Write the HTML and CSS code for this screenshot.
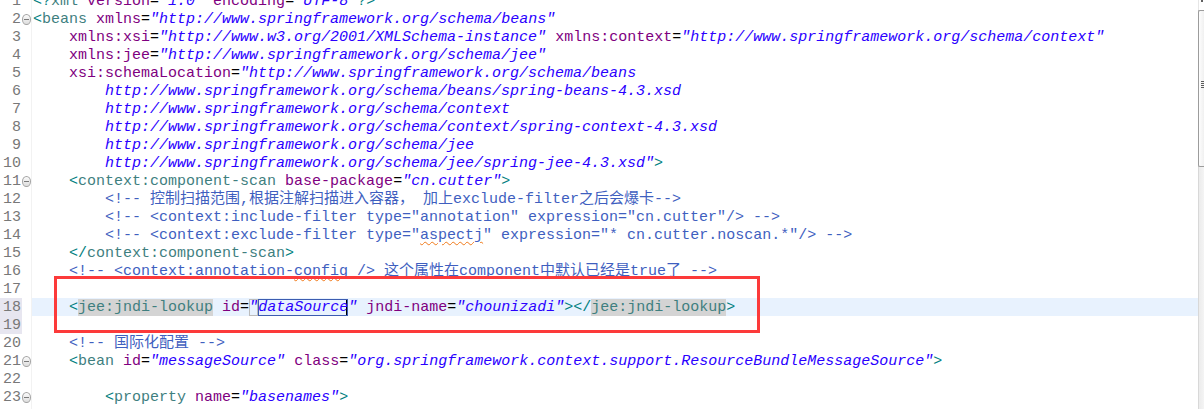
FILE: index.html
```html
<!DOCTYPE html>
<html lang="zh">
<head>
    <meta charset="UTF-8">
    <title>applicationContext.xml</title>
    <link rel="stylesheet" href="styles.css">
</head>
<body>
    <div class="editor">
        <div class="lines">
            <div class="line"><span class="num">1</span><span class="fold"></span><span class="code"><span class="d">&lt;?</span><span class="t">xml</span> <span class="a">version</span>=<span class="v">"1.0"</span> <span class="a">encoding</span>=<span class="v">"UTF-8"</span><span class="d">?&gt;</span></span></div>
            <div class="line"><span class="num">2</span><span class="fold open"></span><span class="code"><span class="d">&lt;</span><span class="t">beans</span> <span class="a">xmlns</span>=<span class="v">"http://www.springframework.org/schema/beans"</span></span></div>
            <div class="line"><span class="num">3</span><span class="fold"></span><span class="code">    <span class="a">xmlns:xsi</span>=<span class="v">"http://www.w3.org/2001/XMLSchema-instance"</span> <span class="a">xmlns:context</span>=<span class="v">"http://www.springframework.org/schema/context"</span></span></div>
            <div class="line"><span class="num">4</span><span class="fold"></span><span class="code">    <span class="a">xmlns:jee</span>=<span class="v">"http://www.springframework.org/schema/jee"</span></span></div>
            <div class="line"><span class="num">5</span><span class="fold"></span><span class="code">    <span class="a">xsi:schemaLocation</span>=<span class="v">"http://www.springframework.org/schema/beans</span></span></div>
            <div class="line"><span class="num">6</span><span class="fold"></span><span class="code">        <span class="v">http://www.springframework.org/schema/beans/spring-beans-4.3.xsd</span></span></div>
            <div class="line"><span class="num">7</span><span class="fold"></span><span class="code">        <span class="v">http://www.springframework.org/schema/context</span></span></div>
            <div class="line"><span class="num">8</span><span class="fold"></span><span class="code">        <span class="v">http://www.springframework.org/schema/context/spring-context-4.3.xsd</span></span></div>
            <div class="line"><span class="num">9</span><span class="fold"></span><span class="code">        <span class="v">http://www.springframework.org/schema/jee</span></span></div>
            <div class="line"><span class="num">10</span><span class="fold"></span><span class="code">        <span class="v">http://www.springframework.org/schema/jee/spring-jee-4.3.xsd"</span><span class="d">&gt;</span></span></div>
            <div class="line"><span class="num">11</span><span class="fold open"></span><span class="code">    <span class="d">&lt;</span><span class="t">context:component-scan</span> <span class="a">base-package</span>=<span class="v">"cn.cutter"</span><span class="d">&gt;</span></span></div>
            <div class="line"><span class="num">12</span><span class="fold"></span><span class="code">        <span class="c">&lt;!-- 控制扫描范围,根据注解扫描进入容器， 加上exclude-filter之后会爆卡--&gt;</span></span></div>
            <div class="line"><span class="num">13</span><span class="fold"></span><span class="code">        <span class="c">&lt;!-- &lt;context:include-filter type="annotation" expression="cn.cutter"/&gt; --&gt;</span></span></div>
            <div class="line"><span class="num">14</span><span class="fold"></span><span class="code">        <span class="c">&lt;!-- &lt;context:exclude-filter type="<span class="typo">aspectj</span>" expression="* cn.cutter.noscan.*"/&gt; --&gt;</span></span></div>
            <div class="line"><span class="num">15</span><span class="fold"></span><span class="code">    <span class="d">&lt;/</span><span class="t">context:component-scan</span><span class="d">&gt;</span></span></div>
            <div class="line"><span class="num">16</span><span class="fold"></span><span class="code">    <span class="c">&lt;!-- &lt;context:annotation-<span class="typo">config</span> /&gt; 这个属性在component中默认已经是true了 --&gt;</span></span></div>
            <div class="line"><span class="num">17</span><span class="fold"></span><span class="code"></span></div>
            <div class="line current"><span class="num">18</span><span class="fold"></span><span class="code">    <span class="d">&lt;</span><span class="t occ">jee:jndi-lookup</span> <span class="a">id</span>=<span class="v linked">"</span><span class="v edit">dataSource</span><span class="v">"</span> <span class="a">jndi-name</span>=<span class="v">"chounizadi"</span><span class="d">&gt;&lt;/</span><span class="t occ">jee:jndi-lookup</span><span class="d">&gt;</span></span></div>
            <div class="line marked"><span class="num">19</span><span class="fold"></span><span class="code"></span></div>
            <div class="line"><span class="num">20</span><span class="fold"></span><span class="code">    <span class="c">&lt;!-- 国际化配置 --&gt;</span></span></div>
            <div class="line"><span class="num">21</span><span class="fold open"></span><span class="code">    <span class="d">&lt;</span><span class="t">bean</span> <span class="a">id</span>=<span class="v">"messageSource"</span> <span class="a">class</span>=<span class="v">"org.springframework.context.support.ResourceBundleMessageSource"</span><span class="d">&gt;</span></span></div>
            <div class="line"><span class="num">22</span><span class="fold"></span><span class="code"></span></div>
            <div class="line"><span class="num">23</span><span class="fold open"></span><span class="code">        <span class="d">&lt;</span><span class="t">property</span> <span class="a">name</span>=<span class="v">"basenames"</span><span class="d">&gt;</span></span></div>
            <div class="line"><span class="num">24</span><span class="fold"></span><span class="code"></span></div>
        </div>
        <div class="callout"></div>
    </div>
    <div class="scrollbar">
        <div class="arrow"></div>
        <div class="thumb"><span class="grip"></span></div>
    </div>
</body>
</html>
```

FILE: styles.css
```css
* {
    margin: 0;
    padding: 0;
    box-sizing: border-box;
}
body {
    display: flex;
    height: 100vh;
    overflow: hidden;
    background: #fff;
    font-family: "Liberation Mono", "Noto Sans CJK SC", monospace;
    font-size: 15px;
}
.editor {
    position: relative;
    flex: 1;
    overflow: hidden;
}
.lines {
    margin-top: -8px;
}
.line {
    display: flex;
    height: 18px;
    line-height: 20px;
}
.num {
    width: 22px;
    padding-right: 1px;
    text-align: right;
    color: #787878;
}
.fold {
    width: 10px;
    border-right: 1px solid #f2f2f2;
    display: flex;
    align-items: center;
}
.fold.open::before {
    content: "";
    width: 9px;
    height: 9px;
    border: 1px solid #a3a3a3;
    border-radius: 50%;
    background-image: linear-gradient(#7a7a7a, #7a7a7a), linear-gradient(#fafafa, #dedede);
    background-size: 5px 1px, 100% 100%;
    background-position: center, center;
    background-repeat: no-repeat;
}
.code {
    flex: 1;
    padding-left: 1px;
    white-space: pre;
    color: #000;
}
.line.current .num,
.line.marked .num {
    background: #e7e6f0;
}
.line.current .code {
    background: #e8f2fe;
}
.d { color: #008080; }
.t { color: #3f7f7f; }
.a { color: #7f007f; }
.v { color: #2a00ff; font-style: italic; }
.c { color: #3f5fbf; }
.occ {
    background: #d4d4d4;
}
.typo {
    text-decoration: underline wavy #f07a1a;
    text-decoration-thickness: 1px;
    text-underline-offset: 2px;
}
.linked {
    outline: 1px solid #bcbcbc;
    outline-offset: -1px;
}
.edit {
    outline: 1px solid #3c5cb0;
    outline-offset: -1px;
    box-shadow: inset -2px 0 #000;
}
.callout {
    position: absolute;
    left: 54px;
    top: 276px;
    width: 706px;
    height: 57px;
    border: 3px solid #fc3a3a;
}
.scrollbar {
    width: 6px;
    background: linear-gradient(to right, #d8d8d8 1px, #ececec 1px, #f4f4f4);
    display: flex;
    flex-direction: column;
}
.arrow {
    height: 10px;
    background: #fff;
    border-left: 1px solid #e6e6e6;
    position: relative;
}
.arrow::after {
    content: "";
    position: absolute;
    right: 1px;
    top: 0;
    width: 2px;
    height: 2px;
    background: #606060;
}
.thumb {
    height: 157px;
    border: 1px solid #9c9c9c;
    border-right: none;
    border-radius: 2px 0 0 2px;
    background: linear-gradient(to right, #fdfdfd, #f0f0f0);
    display: flex;
    align-items: center;
    justify-content: flex-end;
}
.grip {
    width: 3px;
    height: 7px;
    margin-bottom: 8px;
    background: repeating-linear-gradient(#5c5c5c 0 1px, transparent 1px 2px);
}
```
